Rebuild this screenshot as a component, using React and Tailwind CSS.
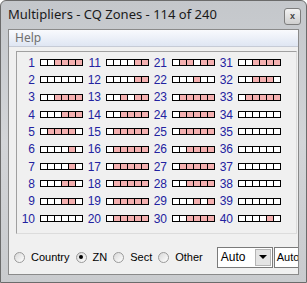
import React from "react";

// zone rows: 1 = worked (pink) for that band slot
const zones = [
  "001111", "000000", "001111", "000111", "011110",
  "000010", "000010", "000110", "000110", "000000",
  "000011", "000011", "001011", "001111", "011111",
  "011111", "011111", "011111", "011111", "011111",
  "011011", "000100", "011111", "011111", "011111",
  "001111", "011111", "001111", "000101", "001111",
  "001111", "001110", "011111", "000000", "000000",
  "000000", "000000", "000000", "000000", "000010",
];

function Boxes({ pattern }) {
  return (
    <div className="flex">
      {pattern.split("").map((c, i) => (
        <div
          key={i}
          className={
            "w-[8px] h-[7px] border border-black " +
            (i > 0 ? "-ml-px " : "") +
            (c === "1" ? "bg-[#f4b0b0]" : "bg-white")
          }
        />
      ))}
    </div>
  );
}

function Radio({ label, checked }) {
  return (
    <div className="flex items-center gap-[6px]">
      <div className="w-[11px] h-[11px] rounded-full border border-[#9a9a9a] bg-gradient-to-br from-[#d8d8d8] to-white flex items-center justify-center">
        {checked && <div className="w-[4px] h-[4px] rounded-full bg-black" />}
      </div>
      <span>{label}</span>
    </div>
  );
}

export default function App() {
  const cols = [0, 1, 2, 3];

  return (
    <div
      className="w-[307px] h-[283px] bg-gradient-to-b from-[#c4c7cb] via-[#d3d5d8] to-[#c9cbce] border border-[#6b6b6b] rounded-t-[6px] flex flex-col overflow-hidden"
      style={{ fontFamily: "'Liberation Sans', Arial, sans-serif" }}
    >
      {/* Title bar */}
      <div className="h-[28px] flex items-center justify-between pl-[7px] pr-[5px] shrink-0">
        <span
          className="text-[13px] text-[#1a1a1a]"
          style={{ fontFamily: "'Noto Sans', sans-serif" }}
        >
          Multipliers - CQ Zones - 114 of 240
        </span>
        <div className="w-[17px] h-[17px] mt-[3px] rounded-[3px] border border-[#7d7d7d] bg-gradient-to-b from-[#f2f2f2] to-[#cfcfcf] flex items-center justify-center text-[9px] leading-none font-bold text-[#444]">
          x
        </div>
      </div>

      {/* Client area */}
      <div className="mx-[7px] mb-[7px] flex-1 border border-[#8a8a8a] bg-[#f0f0f0] flex flex-col">
        {/* Menu bar */}
        <div className="h-[17px] bg-gradient-to-b from-[#f9fafd] to-[#dfe6f3] border-b border-[#c6cbd6] flex items-center pl-[6px] shrink-0">
          <span
            className="text-[12px] text-[#707070]"
            style={{ fontFamily: "'Noto Sans', sans-serif" }}
          >
            Help
          </span>
        </div>

        {/* Zone grid */}
        <div className="mt-[4px] ml-[7px] mr-[1px] border border-[#a0a0a0] border-r-[#dcdcdc] border-b-[#dcdcdc] pt-[2px] pb-[6px] flex">
          {cols.map((c) => (
            <div key={c} className="w-[66px] flex flex-col">
              {zones.slice(c * 10, c * 10 + 10).map((p, i) => (
                <div key={i} className="h-[17.33px] flex items-center">
                  <span className="w-[19px] text-right text-[12px] leading-none text-[#2222a0]">
                    {c * 10 + i + 1}
                  </span>
                  <div className="ml-[5px]">
                    <Boxes pattern={p} />
                  </div>
                </div>
              ))}
            </div>
          ))}
        </div>

        {/* Bottom controls */}
        <div className="flex-1 flex items-center pl-[5px] pt-[6px] text-[11px] text-black">
          <div className="flex items-center gap-[6px]">
            <Radio label="Country" />
            <Radio label="ZN" checked />
            <Radio label="Sect" />
            <Radio label="Other" />
          </div>
          <div className="ml-[14px] w-[56px] h-[21px] border border-[#7a7a7a] bg-white flex items-center justify-between pl-[3px] pr-[1px] text-[12px]">
            <span>Auto</span>
            <div className="w-[16px] h-[17px] bg-[#e4e4e4] border border-[#b5b5b5] flex items-center justify-center">
              <div className="w-0 h-0 border-l-[4px] border-r-[4px] border-t-[4px] border-l-transparent border-r-transparent border-t-black" />
            </div>
          </div>
          <div className="ml-[1px] flex-1 h-[21px] border border-r-0 border-[#7a7a7a] bg-white flex items-center pl-[2px] overflow-hidden text-[11px]">
            <span>Auto</span>
          </div>
        </div>
      </div>
    </div>
  );
}
